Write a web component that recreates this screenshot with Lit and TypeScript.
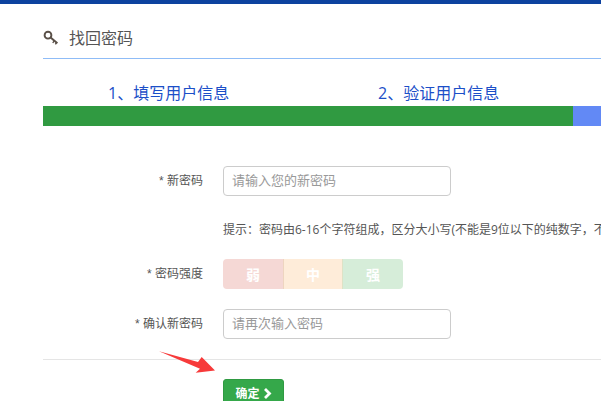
import { LitElement, html, css } from "lit";
import { customElement } from "lit/decorators.js";

@customElement("app-root")
export class AppRoot extends LitElement {
  static styles = css`
    :host {
      display: block;
      position: relative;
      width: 601px;
      height: 401px;
      overflow: hidden;
      background: #fff;
      font-family: "Open Sans", "Noto Sans CJK SC", sans-serif;
      color: #555;
    }
    .topbar { height: 4px; background: #0d429f; }
    .main { padding: 0 0 0 43px; }
    .title {
      height: 55px;
      box-sizing: border-box;
      border-bottom: 1px solid #8fbcf7;
      display: flex;
      align-items: flex-end;
      gap: 10px;
      font-size: 16px;
      line-height: 22px;
      color: #555;
      padding-bottom: 9px;
    }
    .title svg { display: block; flex: none; margin-bottom: 3px; }
    .steps {
      height: 47px;
      display: flex;
      align-items: flex-end;
      color: #1c4fc8;
      font-size: 16px;
      line-height: 22px;
      padding-left: 65px;
      padding-bottom: 2px;
      box-sizing: border-box;
    }
    .step { width: 270px; flex: none; white-space: nowrap; }
    .bar { height: 20px; background: #6289f5; display: flex; }
    .bar-done { width: 530px; background: #309a41; }
    .form { padding-top: 40px; font-size: 12px; }
    .row { display: flex; align-items: center; }
    .label {
      width: 160px;
      flex: none;
      text-align: right;
      line-height: 30px;
      color: #555;
      white-space: nowrap;
      font-family: "Liberation Sans", "Noto Sans CJK SC", sans-serif;
    }
    .field { margin-left: 20px; }
    input {
      display: block;
      width: 228px;
      height: 30px;
      box-sizing: border-box;
      border: 1px solid #ccc;
      border-radius: 4px;
      padding: 0 8px 2px;
      font: inherit;
      font-size: 13px;
      outline: none;
      background: #fff;
    }
    input::placeholder { color: #999; opacity: 1; }
    .hint {
      margin: 18px 0 13px 180px;
      line-height: 32px;
      height: 32px;
      white-space: nowrap;
      color: #555;
    }
    .strength { display: flex; width: 180px; height: 30px; border-radius: 4px; overflow: hidden; color: #fff; font-weight: 700; font-size: 14px; }
    .strength span { display: flex; align-items: center; justify-content: center; }
    .weak { width: 61px; background: #f5d8d5; border-right: 1px solid #eed5c0; box-sizing: border-box; }
    .mid { width: 59px; background: #feecd9; border-right: 1px solid #dfe2c6; box-sizing: border-box; }
    .strong { width: 60px; background: #d6edd9; }
    .gap { height: 20px; }
    .divider { height: 1px; background: #e5e5e5; margin-top: 20px; }
    .actions { padding: 19px 0 0 180px; }
    .btn {
      width: 61px;
      height: 30px;
      box-sizing: border-box;
      display: flex;
      align-items: center;
      justify-content: center;
      gap: 3px;
      background: #35a84a;
      border: 1px solid #2f9a42;
      border-radius: 3px;
      color: #fff;
      font-weight: 700;
      font-size: 12px;
      padding-bottom: 2px;
    }
    .btn svg { display: block; }
    .arrow { position: absolute; left: 155px; top: 347px; display: block; }
  `;

  render() {
    return html`
      <div class="topbar"></div>
      <div class="main">
        <div class="title">
          <svg width="16" height="16" viewBox="0 0 16 16" fill="none" stroke="#5a5048">
            <circle cx="5" cy="5.2" r="3.4" stroke-width="1.9"></circle>
            <path d="M7.6 7.6 L14.4 13.2" stroke-width="2"></path>
            <path d="M11 11 L9.8 13 M13.4 12.6 L12.4 14.4" stroke-width="1.4"></path>
          </svg>
          <span>找回密码</span>
        </div>
        <div class="steps">
          <span class="step">1、填写用户信息</span>
          <span class="step">2、验证用户信息</span>
        </div>
        <div class="bar"><div class="bar-done"></div></div>
        <div class="form">
          <div class="row">
            <div class="label">* 新密码</div>
            <div class="field"><input placeholder="请输入您的新密码" /></div>
          </div>
          <div class="hint">提示：密码由6-16个字符组成，区分大小写(不能是9位以下的纯数字，不能包含空格)</div>
          <div class="row">
            <div class="label">* 密码强度</div>
            <div class="field">
              <div class="strength">
                <span class="weak">弱</span><span class="mid">中</span><span class="strong">强</span>
              </div>
            </div>
          </div>
          <div class="gap"></div>
          <div class="row">
            <div class="label">* 确认新密码</div>
            <div class="field"><input placeholder="请再次输入密码" /></div>
          </div>
          <div class="divider"></div>
          <div class="actions">
            <div class="btn">
              <span>确定</span>
              <svg width="9" height="11" viewBox="0 0 9 11" fill="none" stroke="#fff" stroke-width="2.8">
                <path d="M2 1 L6.5 5.5 L2 10"></path>
              </svg>
            </div>
          </div>
        </div>
      </div>
      <svg class="arrow" width="65" height="30" viewBox="0 0 65 30">
        <path d="M4 4.3 L43 15 L46.7 10 L60 23.5 L40.7 25.7 L45 21.7 Z" fill="#f73a3a"></path>
      </svg>
    `;
  }
}
